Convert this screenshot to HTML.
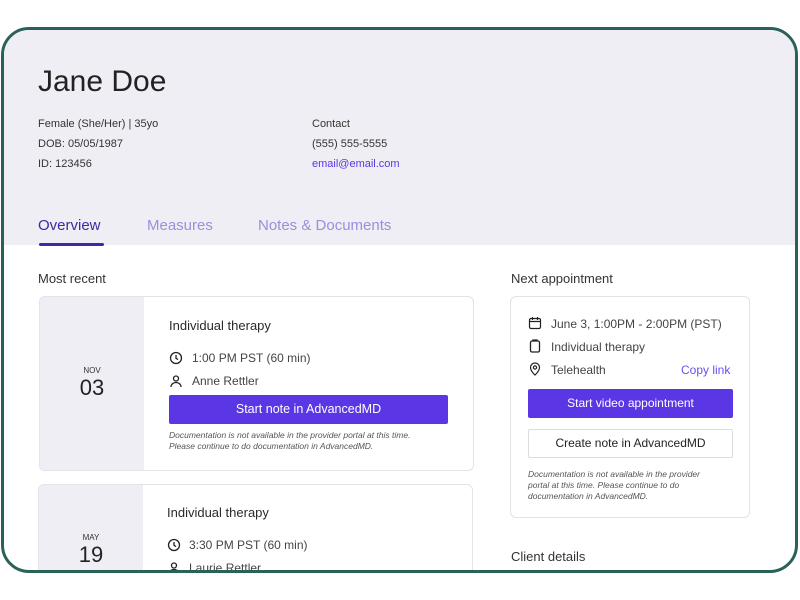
<!DOCTYPE html>
<html><head><style>
*{margin:0;padding:0;box-sizing:border-box}
html,body{width:800px;height:600px;overflow:hidden}
body{background:#fff;font-family:"Liberation Sans",sans-serif;color:#2a2a2e;position:relative}
#f{position:absolute;left:1px;top:27px;width:797px;height:546px;border:3px solid #2b6158;border-radius:28px;overflow:hidden;background:#fff}
.a{position:absolute;white-space:nowrap}
.s{font-size:11px;color:#333}
.card{position:absolute;border:1px solid #e2e2e8;border-radius:6px;background:#fff;overflow:hidden}
.dp{position:absolute;left:0;top:0;bottom:0;width:104px;background:#efeef4;text-align:center}
.btn{position:absolute;background:#5a36e4;color:#fff;font-size:12.5px;text-align:center;border-radius:2px}
.it{font-style:italic;font-size:8.5px;color:#555;line-height:11px}
svg{position:absolute}
</style></head><body>
<div id="f">
<div class="a" style="left:0;top:0;width:800px;height:215px;background:#efeef4"></div>
<div class="a" style="left:34px;top:35px;font-size:30px;color:#222">Jane Doe</div>
<div class="a s" style="left:34px;top:88px">Female (She/Her) | 35yo</div>
<div class="a s" style="left:34px;top:108px">DOB: 05/05/1987</div>
<div class="a s" style="left:34px;top:128px">ID: 123456</div>
<div class="a s" style="left:308px;top:88px">Contact</div>
<div class="a s" style="left:308px;top:108px">(555) 555-5555</div>
<div class="a s" style="left:308px;top:128px;color:#5b35e6">email@email.com</div>
<div class="a" style="left:34px;top:187px;font-size:15px;color:#3b2aa3">Overview</div>
<div class="a" style="left:143px;top:187px;font-size:15px;color:#9b8fdc">Measures</div>
<div class="a" style="left:254px;top:187px;font-size:15px;color:#9b8fdc">Notes &amp; Documents</div>
<div class="a" style="left:35px;top:213px;width:65px;height:3px;background:#3b2aa3;border-radius:2px"></div>
<div class="a" style="left:34px;top:241px;font-size:13px;color:#333">Most recent</div>

<div class="card" style="left:35px;top:266px;width:435px;height:175px">
 <div class="dp"><div style="margin-top:69px;font-size:8px;color:#333">NOV</div><div style="font-size:22px;color:#222">03</div></div>
 <div class="a" style="left:129px;top:21px;font-size:13px">Individual therapy</div>
 <svg style="left:129px;top:54px" width="14" height="14" viewBox="0 0 14 14"><circle cx="7" cy="7" r="5.5" fill="none" stroke="#222" stroke-width="1.3"/><path d="M7 4v3.3l2 1.3" fill="none" stroke="#222" stroke-width="1.3"/></svg>
 <div class="a" style="left:152px;top:54px;font-size:12px;color:#444">1:00 PM PST (60 min)</div>
 <svg style="left:129px;top:77px" width="14" height="14" viewBox="0 0 14 14"><circle cx="7" cy="4.5" r="2.5" fill="none" stroke="#222" stroke-width="1.3"/><path d="M2 13c0-3 2.5-4.5 5-4.5s5 1.5 5 4.5" fill="none" stroke="#222" stroke-width="1.3"/></svg>
 <div class="a" style="left:152px;top:77px;font-size:12px;color:#444">Anne Rettler</div>
 <div class="btn" style="left:129px;top:98px;width:279px;height:29px;line-height:29px">Start note in AdvancedMD</div>
 <div class="a it" style="left:129px;top:133px">Documentation is not available in the provider portal at this time.<br>Please continue to do documentation in AdvancedMD.</div>
</div>

<div class="card" style="left:34px;top:454px;width:435px;height:95px">
 <div class="dp"><div style="margin-top:48px;font-size:8px;color:#333">MAY</div><div style="font-size:22px;color:#222">19</div></div>
 <div class="a" style="left:128px;top:20px;font-size:13px">Individual therapy</div>
 <svg style="left:128px;top:53px" width="14" height="14" viewBox="0 0 14 14"><circle cx="7" cy="7" r="5.5" fill="none" stroke="#222" stroke-width="1.3"/><path d="M7 4v3.3l2 1.3" fill="none" stroke="#222" stroke-width="1.3"/></svg>
 <div class="a" style="left:150px;top:53px;font-size:12px;color:#444">3:30 PM PST (60 min)</div>
 <svg style="left:128px;top:76px" width="14" height="14" viewBox="0 0 14 14"><circle cx="7" cy="4.5" r="2.5" fill="none" stroke="#222" stroke-width="1.3"/><path d="M2 13c0-3 2.5-4.5 5-4.5s5 1.5 5 4.5" fill="none" stroke="#222" stroke-width="1.3"/></svg>
 <div class="a" style="left:150px;top:76px;font-size:12px;color:#444">Laurie Rettler</div>
</div>

<div class="a" style="left:507px;top:241px;font-size:13px;color:#333">Next appointment</div>
<div class="card" style="left:506px;top:266px;width:240px;height:222px">
 <svg style="left:17px;top:19px" width="14" height="14" viewBox="0 0 14 14"><rect x="1.5" y="2.5" width="11" height="10" rx="1.5" fill="none" stroke="#222" stroke-width="1.2"/><path d="M1.5 5.5h11M4.5 1v3M9.5 1v3" stroke="#222" stroke-width="1.2"/></svg>
 <div class="a" style="left:40px;top:20px;font-size:12px;color:#444">June 3, 1:00PM - 2:00PM (PST)</div>
 <svg style="left:17px;top:42px" width="14" height="14" viewBox="0 0 14 14"><rect x="2.5" y="2" width="9" height="11" rx="1.5" fill="none" stroke="#222" stroke-width="1.3"/><path d="M5 2V1h4v1" stroke="#222" stroke-width="1.3" fill="none"/></svg>
 <div class="a" style="left:40px;top:43px;font-size:12px;color:#444">Individual therapy</div>
 <svg style="left:17px;top:65px" width="14" height="14" viewBox="0 0 14 14"><path d="M7 13s4.5-4 4.5-7.5a4.5 4.5 0 0 0-9 0C2.5 9 7 13 7 13z" fill="none" stroke="#222" stroke-width="1.2"/><circle cx="7" cy="5.5" r="1.6" fill="none" stroke="#222" stroke-width="1.2"/></svg>
 <div class="a" style="left:40px;top:66px;font-size:12px;color:#444">Telehealth</div>
 <div class="a" style="left:170px;top:66px;font-size:12px;color:#6b4ff0">Copy link</div>
 <div class="btn" style="left:17px;top:92px;width:205px;height:29px;line-height:29px;font-size:12px">Start video appointment</div>
 <div class="a" style="left:17px;top:132px;width:205px;height:29px;line-height:27px;border:1px solid #ddd;border-radius:2px;text-align:center;font-size:12px;color:#222">Create note in AdvancedMD</div>
 <div class="a it" style="left:17px;top:172px">Documentation is not available in the provider<br>portal at this time. Please continue to do<br>documentation in AdvancedMD.</div>
</div>
<div class="a" style="left:507px;top:519px;font-size:13px;color:#333">Client details</div>
</div>
</body></html>
